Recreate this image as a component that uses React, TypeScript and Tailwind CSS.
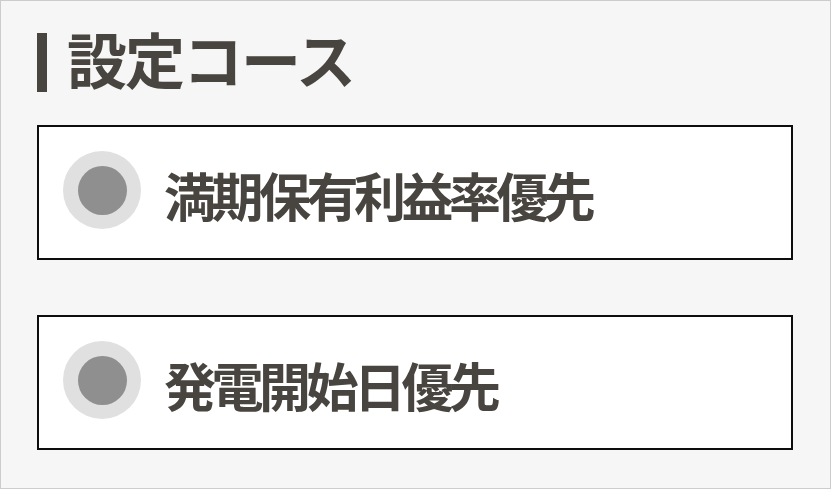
import React from 'react';

const courses = ['満期保有利益率優先', '発電開始日優先'];

const App: React.FC = () => {
  return (
    <div
      className="w-[831px] h-[489px] border border-[#cccccc] bg-[#f6f6f6] pl-[36px] pt-[32px] text-[#48443f]"
      style={{ fontFamily: '"Noto Sans CJK JP", "Noto Sans", sans-serif' }}
    >
      {/* 見出し */}
      <div className="flex items-center h-[59px]">
        <div className="w-[10px] h-[59px] bg-[#48443f]" />
        <h1 className="ml-[20px] mb-[9px] text-[60px] font-bold leading-none tracking-[-2px]">設定コース</h1>
      </div>

      <div className="flex flex-col gap-[55px] mt-[33px]">
        {courses.map((label) => (
          <label
            key={label}
            className="w-[756px] h-[135px] border-2 border-[#0d0d0d] bg-white flex items-center pl-[24px] cursor-pointer"
          >
            <span className="w-[78px] h-[78px] mb-[5px] rounded-full bg-[#e0e0e0] flex items-center justify-center shrink-0">
              <span className="w-[49px] h-[49px] rounded-full bg-[#8f8f8f]" />
            </span>
            <span className="ml-[23px] mt-[5px] text-[52px] font-bold leading-none tracking-[-4.5px]">{label}</span>
          </label>
        ))}
      </div>
    </div>
  );
};

export default App;
